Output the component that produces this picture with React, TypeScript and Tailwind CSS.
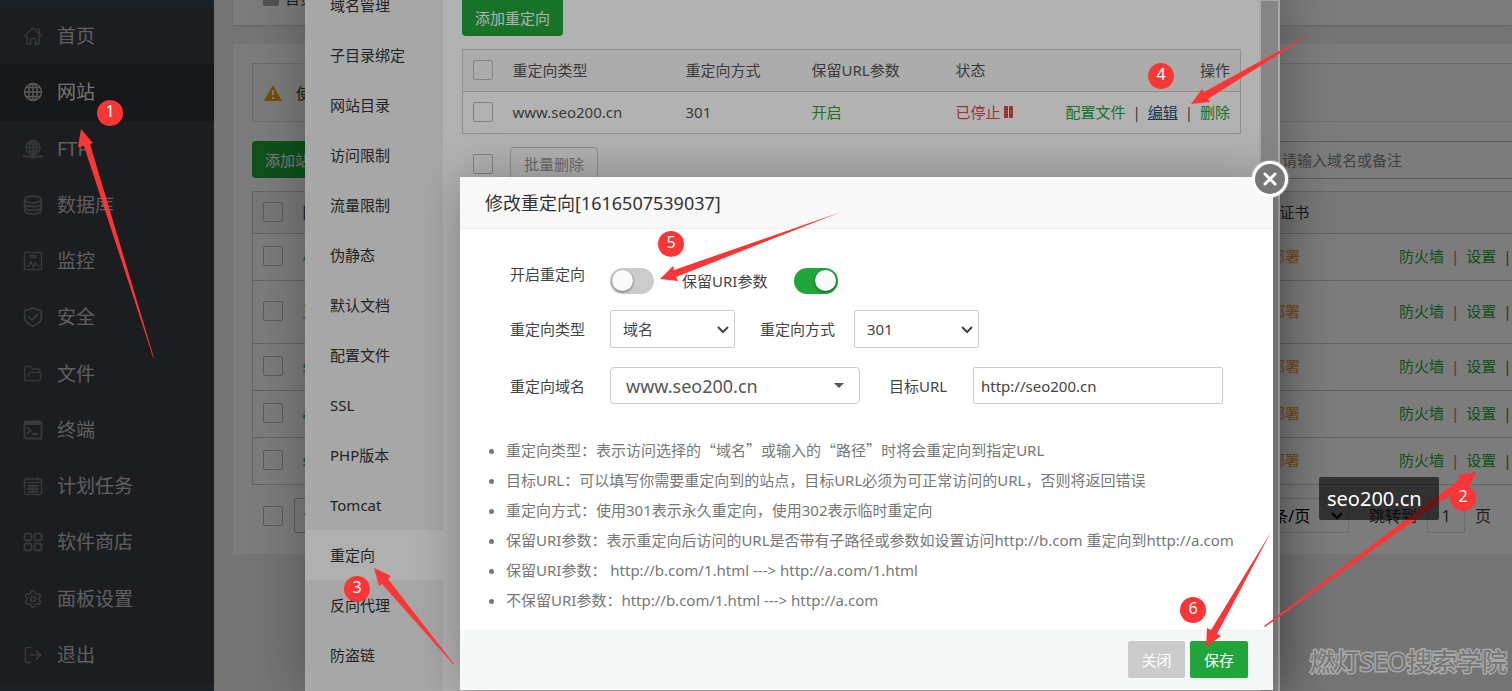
import type { ReactNode } from "react";
import { FolderOpen, LogOut, Settings } from "lucide-react";

const Svg = ({ children }: { children: ReactNode }) => (
  <svg viewBox="0 0 20 20" className="w-5 h-5" fill="none" stroke="currentColor" strokeWidth="1.4">
    {children}
  </svg>
);

const menu = [
  {
    name: "首页",
    icon: <Svg><path d="M1 10.500 10 2l9 8.500M13.500 3h3v4.500M4 9.500V18h3.500v-4.500a1 1 0 0 1 1-1h3a1 1 0 0 1 1 1V18H16V9.500" /></Svg>,
  },
  {
    name: "网站",
    active: true,
    icon: <Svg><circle cx="10" cy="10" r="8.500" /><ellipse cx="10" cy="10" rx="4.300" ry="8.500" /><path d="M10 1.500v17M1.500 10h17M3 5.500h14M3 14.500h14" /></Svg>,
  },
  {
    name: "FTP",
    icon: <Svg><circle cx="10" cy="8.500" r="7" /><ellipse cx="10" cy="8.500" rx="3.400" ry="7" /><path d="M10 1.500v14M3 8.500h14M4.500 5h11M4.500 12h11" /><path d="M0 17.500h7.500M12.500 17.500H20" strokeWidth="2" /><circle cx="10" cy="17.500" r="1.800" fill="currentColor" /></Svg>,
  },
  {
    name: "数据库",
    icon: <Svg><g strokeWidth="1.800"><ellipse cx="10" cy="4.500" rx="8.300" ry="3.300" /><path d="M1.700 4.500v11c0 4.400 16.600 4.400 16.600 0v-11M1.700 8.200c0 4.400 16.600 4.400 16.600 0M1.700 11.900c0 4.400 16.600 4.400 16.600 0" /></g></Svg>,
  },
  {
    name: "监控",
    icon: <Svg><path d="M1.500 1.500h17v17h-17zM6.500 4.500h7M6.500 6.500h7M3.500 15h2.500l2-4.500 2.500 5.500 2-4.500 1.500 3h2.500" /></Svg>,
  },
  {
    name: "安全",
    icon: <Svg><g strokeWidth="1.800"><path d="M10 1c2.500 1.700 5.500 2.300 8.300 2.300v7c0 4.200-3.500 7-8.300 9-4.800-2-8.300-4.800-8.300-9v-7C4.500 3.300 7.500 2.700 10 1z" /><path d="m5.500 9.500 3.500 3.500 6-6" /></g></Svg>,
  },
  { name: "文件", icon: <FolderOpen className="w-5 h-5" strokeWidth={1.6} /> },
  {
    name: "终端",
    icon: <Svg><g strokeWidth="1.800"><rect x="1.500" y="1.500" width="17" height="17" rx="1" /><path d="M1.500 3.500h17" strokeWidth="3" /><path d="m4 7.500 4 3-4 3M9 14h6" /></g></Svg>,
  },
  {
    name: "计划任务",
    icon: <Svg><rect x="1.500" y="3" width="17" height="15.500" rx="2" /><path d="M1.500 6.500h17M5.500 1v3.500M14.500 1v3.500M4 10h12M4 13h12M4 16h12M7 8v9M10 8v9M13 8v9" /></Svg>,
  },
  {
    name: "软件商店",
    icon: <Svg><g strokeWidth="1.800"><rect x="1.500" y="1.500" width="7" height="7" rx="2" /><rect x="11.500" y="1.500" width="7" height="7" rx="2" /><rect x="1.500" y="11.500" width="7" height="7" rx="2" /><rect x="11.500" y="11.500" width="7" height="7" rx="2" /></g></Svg>,
  },
  { name: "面板设置", icon: <Settings className="w-5 h-5" strokeWidth={1.8} /> },
  { name: "退出", icon: <LogOut className="w-5 h-5" strokeWidth={1.8} /> },
];

const sites = [
  { name: "小站", height: "h-[47px]", color: "text-[#20a53a]" },
  { name: "王牌", height: "h-[63px]", color: "text-[#7fa520]" },
  { name: "seo200", height: "h-[47px]", color: "text-[#20a53a]" },
  { name: "a.com", height: "h-[47px]", color: "text-[#20a53a]" },
  { name: "shop", height: "h-[47px]", color: "text-[#20a53a]" },
];

const tabs = ["域名管理", "子目录绑定", "网站目录", "访问限制", "流量限制", "伪静态", "默认文档", "配置文件", "SSL", "PHP版本", "Tomcat", "重定向", "反向代理", "防盗链"];

const Quote = ({ children }: { children: ReactNode }) => (
  <>
    <span className="font-['Noto_Sans_CJK_SC',sans-serif]">“</span>
    {children}
    <span className="font-['Noto_Sans_CJK_SC',sans-serif]">”</span>
  </>
);

const tips = [
  <>重定向类型：表示访问选择的<Quote>域名</Quote>或输入的<Quote>路径</Quote>时将会重定向到指定URL</>,
  <>目标URL：可以填写你需要重定向到的站点，目标URL必须为可正常访问的URL，否则将返回错误</>,
  <>重定向方式：使用301表示永久重定向，使用302表示临时重定向</>,
  <>保留URI参数：表示重定向后访问的URL是否带有子路径或参数如设置访问http://b.com 重定向到http://a.com</>,
  <>保留URI参数： http://b.com/1.html ---&gt; http://a.com/1.html</>,
  <>不保留URI参数：http://b.com/1.html ---&gt; http://a.com</>,
];

const arrows = [
  "81,129 93,143 90,144 154,358 153,357 84,146 78,147",
  "1476,472 1457,475 1460,479 1264,626 1265,627 1464,485 1469,488",
  "374,568 391,576 388,579 454,664 453,664 382,584 379,586",
  "1191,104 1202,89 1204,92 1312,33 1208,99 1210,102",
  "660,279 673,266 674,270 841,212 676,277 678,281",
  "1206,647 1207,628 1211,630 1271,532 1217,634 1221,636",
];

const Check = ({ label }: { label: string }) => (
  <input type="checkbox" aria-label={label} className="block appearance-none w-5 h-5 rounded-xs border border-[#bbb]" />
);

const Chevron = ({ className }: { className: string }) => (
  <svg viewBox="0 0 12 8" className={`absolute w-3 h-2 pointer-events-none ${className}`} fill="none" stroke="currentColor" strokeWidth="2">
    <path d="m1 1 5 5 5-5" />
  </svg>
);

const Switch = ({ id, on }: { id: string; on?: boolean }) => (
  <label className="relative w-11 h-[26px] shrink-0">
    <input id={id} type="checkbox" defaultChecked={on} className="peer sr-only" />
    <span className="block w-11 h-[26px] rounded-full bg-[#ccc] peer-checked:bg-[#20a53a]" />
    <span className="absolute top-[2px] left-[2px] peer-checked:left-[21px] w-[21px] h-[21px] rounded-full bg-[#fafafa] shadow-[0_1px_3px_rgba(0,0,0,0.5)]" />
  </label>
);

const Badge = ({ n, className }: { n: number; className: string }) => (
  <span className={`absolute w-[26px] h-[26px] rounded-full bg-[#fb3636] text-white text-[16px] leading-[23px] text-center ${className}`}>{n}</span>
);

const Sidebar = () => (
  <aside className="w-[214px] shrink-0 flex flex-col bg-[#3a454c]">
    <nav className="flex-1 grid auto-rows-fr my-2 bg-[#383d45]">
      {menu.map((item) => (
        <a
          key={item.name}
          href="#"
          className={`flex items-center pl-[23px] text-[19px] leading-6 ${item.active ? "bg-[#2e3035] text-[#eee]" : "text-[#c4c4c4]"}`}
        >
          <span className={`mr-[14px] ${item.active ? "text-[#bbb]" : "text-[#74767a]"}`}>{item.icon}</span>
          {item.name}
        </a>
      ))}
    </nav>
  </aside>
);

const Sites = () => (
  <main className="flex-1 min-w-0 pl-[19px] bg-[#f0f0f0] overflow-hidden">
    <header className="h-[25px] overflow-hidden bg-white pl-[30px] shadow-sm">
      <div className="-mt-[14px] leading-6 flex gap-[6px] items-center text-[#444]"><span className="w-4 h-4 bg-[#aaa] rounded-xs" />首页</div>
    </header>
    <section className="mt-[19px] h-[510px] pl-[19px] pt-[19px] bg-white">
      <div className="flex items-center h-[59px] pl-[11px] border border-r-0 border-[#ddd] bg-[#fcfcfc]">
        <svg viewBox="0 0 18 16" className="w-[18px] h-4 mr-[14px]">
          <path d="M9 0 18 16H0z" fill="#f39c12" />
          <path d="M9 5v5M9 12v2" stroke="#fff" strokeWidth="2" />
        </svg>
        使用宝塔Linux面板创建站点时会自动创建权限
      </div>
      <div className="mt-[19px] flex justify-between">
        <button className="h-[37px] px-[13px] rounded-sm bg-[#20a53a] text-white">添加站点</button>
        <input aria-label="搜索" placeholder="请输入域名或备注" className="w-[243px] h-[38px] pl-[12px] border border-r-0 border-[#bbb] placeholder:text-[#888]" />
      </div>
      <table className="w-full mt-[12px] table-fixed border border-r-0 border-[#ccc] text-left [&_td]:pb-[2px] [&_th]:pb-[2px]">
        <thead>
          <tr className="h-[42px] bg-[#f6f6f6]">
            <th className="w-[50px] pl-[10px]"><Check label="全选网站" /></th>
            <th className="font-normal">网站名</th>
            <th className="w-[124px] font-normal">SSL证书</th>
            <th className="w-[133px]" />
          </tr>
        </thead>
        <tbody>
          {sites.map((site) => (
            <tr key={site.name} className={`border-t border-[#ccc] ${site.height}`}>
              <td className="pl-[10px]"><Check label={site.name} /></td>
              <td className={site.color}>{site.name}</td>
              <td className="text-[#f0982c]">未部署</td>
              <td className="whitespace-nowrap overflow-hidden pl-[20px] text-[#20a53a]">
                <a href="#">防火墙</a>
                <span className="mx-[7px] text-[#a67c52]">|</span>
                <a href="#">设置</a>
                <span className="mx-[7px] text-[#7c5252]">|</span>
                <a href="#">删除</a>
              </td>
            </tr>
          ))}
        </tbody>
      </table>
      <div className="mt-[13px] flex items-center text-[16px] text-[#444]">
        <span className="pl-[11px] mr-[11px]"><Check label="全选" /></span>
        <button className="w-[150px] h-[35px] border border-[#bbb] rounded-xs text-left pl-2 text-[#888]">请选择批量操作</button>
        <span className="relative ml-auto mr-[20px] text-black">
          <select aria-label="每页条数" className="appearance-none w-[110px] h-[35px] border border-[#ddd] pl-[14px]">
            <option>10条/页</option>
          </select>
          <Chevron className="right-[6px] top-[14px]" />
        </span>
        跳转到
        <input aria-label="页码" defaultValue="1" className="w-[38px] h-[35px] mx-[10px] text-center border border-[#ddd]" />
        <span className="mr-[21px]">页</span>
      </div>
    </section>
  </main>
);

const SiteDialog = () => (
  <div className="absolute -top-5 bottom-0 left-[305px] w-[975px] flex bg-white shadow-[1px_1px_50px_rgba(0,0,0,0.3)]">
    <nav className="w-[138px] shrink-0 bg-[#f0f0f0] text-[#333]">
      {tabs.map((tab) => (
        <a key={tab} href="#" className={`block h-[50px] pl-[25px] leading-[50px] ${tab === "重定向" ? "bg-[#fdfdfd]" : ""}`}>
          {tab}
        </a>
      ))}
    </nav>
    <div className="flex-1 pt-5 pl-[19px] pr-[18px] text-[#555]">
      <button className="block h-9 px-[13px] rounded-b-sm bg-[#20a53a] text-white">添加重定向</button>
      <table className="mt-[13px] w-full table-fixed border border-[#d0d0d0] text-left [&_td]:pb-[2px] [&_th]:pb-[2px]">
        <thead>
          <tr className="h-[42px] bg-[#f6f6f6]">
            <th className="w-[50px] pl-[10px]"><Check label="全选重定向" /></th>
            <th className="w-[173px] font-normal">重定向类型</th>
            <th className="w-[126px] font-normal">重定向方式</th>
            <th className="w-[144px] font-normal">保留URL参数</th>
            <th className="w-[100px] font-normal">状态</th>
            <th className="pr-[10px] text-right font-normal">操作</th>
          </tr>
        </thead>
        <tbody>
          <tr className="h-[42px] border-t border-[#d0d0d0]">
            <td className="pl-[10px]"><Check label="www.seo200.cn" /></td>
            <td>www.seo200.cn</td>
            <td>301</td>
            <td className="text-[#20a53a]">开启</td>
            <td className="text-[#e04c4c]">
              <span className="flex items-center gap-[3px]">
                已停止
                <svg viewBox="0 0 9 12" className="w-[9px] h-3" fill="currentColor"><path d="M0 0h4v12H0zM5 0h4v12H5z" /></svg>
              </span>
            </td>
            <td className="pr-[10px] text-right whitespace-nowrap text-[#20a53a]">
              <a href="#">配置文件</a>
              <span className="mx-[7px] text-[#555]">|</span>
              <a href="#" className="underline text-[#23527c]">编辑</a>
              <span className="mx-[7px] text-[#555]">|</span>
              <a href="#">删除</a>
            </td>
          </tr>
        </tbody>
      </table>
      <div className="mt-[13px] flex items-center pl-[11px]">
        <Check label="全选批量" />
        <button className="ml-[17px] w-[88px] h-[34px] border border-[#ccc] rounded-sm text-[#999]">批量删除</button>
      </div>
    </div>
    <div className="w-[21px] pt-[21px] px-[2px] bg-[#f1f1f1]"><div className="h-full bg-[#c1c1c1]" /></div>
  </div>
);

const EditDialog = () => (
  <div role="dialog" aria-label="修改重定向" className="absolute top-[177px] left-[460px] w-[813px] rounded-xs bg-white text-[#444] shadow-[1px_1px_50px_rgba(0,0,0,0.3)]">
    <h2 className="h-[52px] pl-[25px] text-[18px] leading-[52px] bg-[#f8f8f8] border-b border-[#eee] text-[#333]">修改重定向[1616507539037]</h2>
    <button aria-label="关闭窗口" className="absolute -top-4 -right-[15px] w-9 h-9 rounded-full bg-[#777] border-3 border-white shadow-[0_0_2px_#fff]">
      <svg viewBox="0 0 30 30" className="w-full h-full" stroke="#fff" strokeWidth="3" strokeLinecap="round">
        <path d="m10 10 10 10M20 10 10 20" />
      </svg>
    </button>
    <form className="pt-[33px] pl-[50px]">
      <div className="flex items-center h-[38px]">
        <label htmlFor="open" className="w-[100px] self-start leading-6">开启重定向</label>
        <Switch id="open" />
        <label htmlFor="keep" className="w-[112px] ml-7">保留URI参数</label>
        <Switch id="keep" on />
      </div>
      <div className="flex items-center mt-[10px]">
        <label htmlFor="type" className="w-[100px]">重定向类型</label>
        <span className="relative">
          <select id="type" className="block appearance-none w-[125px] h-[38px] pl-3 border border-[#ccc] rounded-xs"><option>域名</option></select>
          <Chevron className="right-[6px] top-[16px]" />
        </span>
        <label htmlFor="mode" className="w-[94px] ml-[25px]">重定向方式</label>
        <span className="relative">
          <select id="mode" className="block appearance-none w-[125px] h-[38px] pl-3 border border-[#ccc] rounded-xs"><option>301</option></select>
          <Chevron className="right-[6px] top-[16px]" />
        </span>
      </div>
      <div className="flex items-center mt-[19px]">
        <label htmlFor="domain" className="w-[100px]">重定向域名</label>
        <button id="domain" type="button" className="flex items-center justify-between w-[250px] h-[37px] pl-[15px] pr-[15px] border border-[#ccc] rounded-sm text-[18px] text-[#555]">
          www.seo200.cn
          <svg viewBox="0 0 10 5" className="w-[10px] h-[5px]" fill="currentColor"><path d="M0 0h10L5 5z" /></svg>
        </button>
        <label htmlFor="target" className="w-[84px] ml-[29px]">目标URL</label>
        <input id="target" defaultValue="http://seo200.cn" className="w-[250px] h-[37px] px-[7px] border border-[#ccc] rounded-xs" />
      </div>
    </form>
    <ul className="mt-[31px] pl-[46px] list-disc leading-[30px] text-[#777] whitespace-nowrap">
      {tips.map((tip, i) => (
        <li key={i}>{tip}</li>
      ))}
    </ul>
    <footer className="mt-[15px] flex justify-end gap-[5px] pt-[10px] pb-3 pr-[25px] bg-[#f6f8f8] border-t border-[#edf1f2] text-white">
      <button className="w-[57px] h-[37px] rounded-xs bg-[#cbcbcb]">关闭</button>
      <button className="w-[58px] h-[37px] rounded-xs bg-[#20a53a]">保存</button>
    </footer>
  </div>
);

const App = () => {
  return (
    <div className="relative flex min-h-screen overflow-hidden text-[15px] leading-5 text-[#333] font-['Noto_Sans','Noto_Sans_CJK_SC',sans-serif]">
      <Sidebar />
      <Sites />
      <div className="absolute inset-0 bg-black/30" />
      <SiteDialog />
      <div className="absolute inset-0 bg-black/30" />
      <EditDialog />

      {/* step arrows */}
      <svg className="absolute top-0 left-0 w-[1512px] h-[691px] pointer-events-none" viewBox="0 0 1512 691" fill="#fb3636">
        {arrows.map((points) => (
          <polygon key={points} points={points} />
        ))}
      </svg>
      <span className="absolute top-[477px] left-[1319px] w-[120px] h-[43px] px-2 rounded-xs bg-black/60 text-white text-[20px] leading-[43px]">seo200.cn</span>
      <Badge n={1} className="top-[100px] left-[97px]" />
      <Badge n={2} className="top-[485px] left-[1450px]" />
      <Badge n={3} className="top-[576px] left-[344px]" />
      <Badge n={4} className="top-[63px] left-[1148px]" />
      <Badge n={5} className="top-[231px] left-[658px]" />
      <Badge n={6} className="top-[597px] left-[1180px]" />
      <span className="absolute bottom-3 right-[5px] text-[25px] leading-9 text-[#757575] [-webkit-text-stroke:3px_#a8a8a8] [paint-order:stroke_fill]">燃灯SEO搜索学院</span>
    </div>
  );
};

export default App;
